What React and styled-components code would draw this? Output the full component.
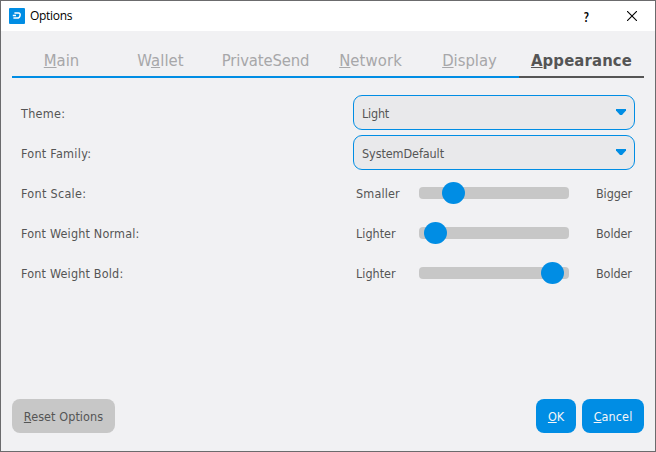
import React from 'react';
import styled, { createGlobalStyle } from 'styled-components';

const Global = createGlobalStyle`
  * { box-sizing: border-box; }
  body { margin: 0; }
  button { font: inherit; border: 0; padding: 0; }
`;

const Window = styled.div`
  width: 656px;
  height: 452px;
  display: flex;
  flex-direction: column;
  border: 1px solid #6b6b6d;
  background: #f1f1f3;
  color: #555555;
  font-family: 'DejaVu Sans Condensed', 'DejaVu Sans', sans-serif;
  font-stretch: condensed;
  font-size: 12.5px;
  white-space: nowrap;
`;

const TitleBar = styled.header`
  height: 30px;
  flex: none;
  display: flex;
  align-items: center;
  padding-left: 8px;
  padding-right: 1px;
  background: #fff;
  color: #000;
  svg { display: block; flex: none; }
`;

const Title = styled.span`
  flex: 1;
  margin-left: 5px;
  font-family: 'Open Sans', 'Noto Sans', sans-serif;
  font-stretch: normal;
  font-size: 12px;
  line-height: 16px;
  letter-spacing: -0.3px;
`;

const WindowButton = styled.button`
  width: 45px;
  height: 30px;
  display: grid;
  place-items: center;
  background: none;
  color: #000;
  font-family: 'Open Sans', sans-serif;
  font-weight: 600;
  font-size: 14px;
`;

const Label = styled.span`
  letter-spacing: ${p => p.$spacing || 0}px;
  line-height: 16px;
`;

const Key = styled.span`
  text-decoration: underline;
  text-decoration-thickness: 1px;
  text-underline-offset: 1px;
  text-decoration-skip-ink: none;
`;

const Tabs = styled.nav`
  display: grid;
  grid-template-columns: 99px 99px 111px 99px 99px 125px;
  height: 47px;
  flex: none;
  margin: 0 11px;
`;

const Tab = styled.button`
  display: flex;
  justify-content: center;
  padding-top: 20px;
  background: none;
  font-size: 16.5px;
  font-weight: ${p => (p.$active ? 700 : 400)};
  color: ${p => (p.$active ? '#555555' : '#a7a7a9')};
  border-bottom: 2px solid ${p => (p.$active ? '#555555' : '#008de4')};
  ${Label} { line-height: 20px; }
`;

const Form = styled.main`
  flex: 1;
  padding: 15px 20px 0;
`;

const Row = styled.div`
  height: 40px;
  display: grid;
  grid-template-columns: 332px 282px;
  align-items: center;
  & > ${Label} { padding-top: 2px; }
`;

const Select = styled.div`
  height: 35px;
  margin-bottom: 1px;
  display: flex;
  align-items: center;
  justify-content: space-between;
  padding: 2px 8px 0 8px;
  border: 1px solid #008de4;
  border-radius: 9px;
  background: #e9e9eb;
  svg { display: block; margin-top: -4px; }
`;

const SliderRow = styled.div`
  display: grid;
  grid-template-columns: 63px 150px 1fr;
  align-items: center;
  padding-left: 3px;
  & > ${Label} { padding-top: 2px; }
  & > ${Label}:last-child { padding-left: 27px; }
`;

const Track = styled.div`
  height: 12px;
  margin-top: -1px;
  border-radius: 4px;
  background: #c7c7c7;
  display: flex;
  align-items: center;
`;

const Handle = styled.div`
  width: 23px;
  height: 22px;
  flex: none;
  margin-left: ${p => p.$offset}px;
  border-radius: 50%;
  background: #008de4;
`;

const Footer = styled.footer`
  height: 52px;
  flex: none;
  display: flex;
  gap: 6px;
  padding: 0 11px;
`;

const Button = styled.button`
  width: ${p => p.$width}px;
  height: 34px;
  padding-top: 2px;
  border-radius: 8px;
  background: ${p => (p.$primary ? '#008de4' : '#c7c7c7')};
  color: ${p => (p.$primary ? '#f5f5f7' : '#555555')};
  margin-right: ${p => (p.$push ? 'auto' : 0)};
`;

const Logo = () => (
  <svg width="16" height="16" viewBox="0 0 16 16">
    <rect width="16" height="16" rx="1" fill="#008de4" />
    <path d="M5.4 5H9.4Q11.6 5 11.1 7.3Q10.6 10.1 8.2 10.1H4.4M3.8 7.6H7" fill="none" stroke="#fff" strokeWidth="1.5" />
  </svg>
);

const Arrow = () => (
  <svg width="10" height="6" viewBox="0 0 10 6">
    <path d="M0 0H10V1.5L6 6H4L0 1.5Z" fill="#008de4" />
  </svg>
);

const tabs = [
  ['', 'M', 'ain', 0],
  ['W', 'a', 'llet', 0.1],
  ['PrivateSend', '', '', -0.15],
  ['', 'N', 'etwork', 0.1],
  ['', 'D', 'isplay', 0],
  ['', 'A', 'ppearance', 0.15],
];

const selects = [
  ['Theme:', 'Light', 0.3, -0.2],
  ['Font Family:', 'SystemDefault', 0.27, -0.08],
];

const sliders = [
  ['Font Scale:', 'Smaller', 'Bigger', 23, 0.3, 0.15],
  ['Font Weight Normal:', 'Lighter', 'Bolder', 5, 0.18, 0],
  ['Font Weight Bold:', 'Lighter', 'Bolder', 122, 0.18, 0],
];

export default function App() {
  return (
    <Window>
      <Global />
      <TitleBar>
        <Logo />
        <Title>Options</Title>
        <WindowButton>?</WindowButton>
        <WindowButton>
          <svg width="10" height="10" viewBox="0 0 10 10">
            <path d="M0 0L10 10M10 0L0 10" stroke="#000" strokeWidth="1.1" />
          </svg>
        </WindowButton>
      </TitleBar>
      <Tabs>
        {tabs.map(([before, key, after, spacing], i) => (
          <Tab key={i} $active={i === 5}>
            <Label $spacing={spacing}>{before}{key && <Key>{key}</Key>}{after}</Label>
          </Tab>
        ))}
      </Tabs>
      <Form>
        {selects.map(([label, value, labelSpacing, valueSpacing]) => (
          <Row key={label}>
            <Label $spacing={labelSpacing}>{label}</Label>
            <Select><Label $spacing={valueSpacing}>{value}</Label><Arrow /></Select>
          </Row>
        ))}
        {sliders.map(([label, low, high, offset, labelSpacing, lowSpacing]) => (
          <Row key={label}>
            <Label $spacing={labelSpacing}>{label}</Label>
            <SliderRow>
              <Label $spacing={lowSpacing}>{low}</Label>
              <Track><Handle $offset={offset} /></Track>
              <Label $spacing={-0.1}>{high}</Label>
            </SliderRow>
          </Row>
        ))}
      </Form>
      <Footer>
        <Button $width={103} $push><Label $spacing={0.08}><Key>R</Key>eset Options</Label></Button>
        <Button $width={40} $primary><Label><Key>O</Key>K</Label></Button>
        <Button $width={62} $primary><Label $spacing={0.1}><Key>C</Key>ancel</Label></Button>
      </Footer>
    </Window>
  );
}
